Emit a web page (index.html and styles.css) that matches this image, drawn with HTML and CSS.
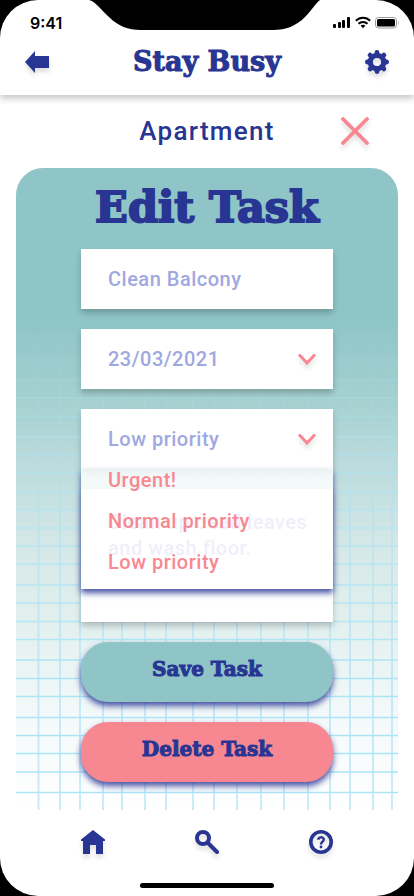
FILE: index.html
```html
<!DOCTYPE html>
<html lang="en">
<head>
<meta charset="utf-8">
<meta name="viewport" content="width=device-width, initial-scale=1">
<title>Stay Busy</title>
<link rel="stylesheet" href="styles.css">
</head>
<body>
<div class="screen">
  <header class="top">
    <svg class="notch" width="236" height="31" viewBox="0 0 236 31" aria-hidden="true"><path d="M0 0C6 1 12 10 20 17C29 26 39 30 52 30H184C197 30 207 26 216 17C223 10 227 3 231 0Z"/></svg>
    <div class="status">
      <span class="time">9:41</span>
      <svg width="68" height="14" viewBox="0 0 68 14" aria-hidden="true">
        <g fill="#000"><rect x="1" y="8" width="3" height="4" rx="1"/><rect x="6" y="6" width="3" height="6" rx="1"/><rect x="10" y="4" width="3" height="8" rx="1"/><rect x="15" y="1" width="3" height="11" rx="1"/></g>
        <g fill="none" stroke="#000" stroke-width="2"><path d="M23.8 4.8C28 .7 34 .7 38.200 4.800"/><path d="M26.500 7.700C29 5.300 33 5.300 35.500 7.700"/></g>
        <path d="M28.600 9.700Q31 7.700 33.400 9.700L31 12.200Z"/>
        <rect x="43.500" y="1.500" width="21" height="10.500" rx="3" fill="none" stroke="#999"/>
        <rect x="45" y="3" width="18" height="7.500" rx="1.500"/><path d="M66 5v4q1.500-2 0-4" fill="#999"/>
      </svg>
    </div>
    <div class="bar">
      <a class="icon" href="#" aria-label="Back"><svg width="24" height="24" viewBox="0 0 24 24"><path d="M0 12L10 1V6H24V18H10V23Z"/></svg></a>
      <h1 class="display brand">Stay Busy</h1>
      <button class="icon" type="button" aria-label="Settings"><svg width="24" height="24" viewBox="0 0 24 24"><circle cx="12" cy="12" r="6.700" fill="none" stroke="#283593" stroke-width="5.200"/><g stroke="#283593" stroke-width="4.800" stroke-linecap="round"><path d="M12 2.400V4M12 20v1.600M2.400 12H4M20 12h1.600M5.100 5.100l1.200 1.200M17.700 17.700l1.200 1.200M5.100 18.900l1.200-1.200M17.700 6.300l1.200-1.200"/></g></svg></button>
    </div>
  </header>

  <main>
    <div class="room">
      <h2>Apartment</h2>
      <button class="icon" type="button" aria-label="Close"><svg width="28" height="28" viewBox="0 0 28 28" fill="none" stroke="#f78891" stroke-width="3.800" stroke-linecap="round"><path d="M2 2L26 26M26 2L2 26"/></svg></button>
    </div>

    <form class="panel">
      <svg class="paper" viewBox="0 0 382 642" preserveAspectRatio="none" aria-hidden="true">
        <defs>
          <linearGradient id="wash" x1="0" y1="0" x2="0" y2="1">
            <stop offset=".24" stop-color="#8fc5c7"/>
            <stop offset=".35" stop-color="#a3cfcf"/>
            <stop offset=".45" stop-color="#b9dadb"/>
            <stop offset=".59" stop-color="#d5e8e8"/>
            <stop offset=".74" stop-color="#e6f2f1"/>
            <stop offset=".87" stop-color="#f5fafb"/>
            <stop offset="1" stop-color="#fff"/>
          </linearGradient>
          <linearGradient id="fade" x1="0" y1="0" x2="0" y2="642" gradientUnits="userSpaceOnUse">
            <stop offset=".24" stop-color="#fff" stop-opacity="0"/>
            <stop offset=".45" stop-color="#fff" stop-opacity=".5"/>
            <stop offset=".8" stop-color="#fff"/>
          </linearGradient>
          <mask id="lines"><rect width="382" height="642" fill="url(#fade)"/></mask>
        </defs>
        <rect width="382" height="642" fill="url(#wash)"/>
        <g mask="url(#lines)" fill="none" stroke-width="2">
          <path stroke="#a6dff5" stroke-opacity=".6" d="M22.500 0V642M44 0V642M64 0V642M87 0V642M106 0V642M129 0V642M150 0V642M177 0V642M198 0V642M221 0V642M245 0V642M268 0V642M292 0V642M314 0V642M334 0V642M357 0V642M376 0V642"/>
          <path stroke="#aae5f5" stroke-width="1.500" d="M0 192H382M0 212H382M0 230H382M0 248.500H382M0 269H382M0 287H382M0 305H382M0 323.500H382M0 342H382M0 360H382M0 378H382M0 396H382M0 417H382M0 435H382M0 453.500H382M0 471.500H382M0 492H382M0 510.500H382M0 528.500H382M0 549.500H382M0 567.500H382M0 585.500H382M0 604H382M0 624.500H382"/>
        </g>
      </svg>
      <h2 class="display title">Edit Task</h2>
      <div class="fields">
        <input class="field" type="text" value="Clean Balcony" aria-label="Task name">
        <div class="pick">
          <select class="field" aria-label="Date"><option>23/03/2021</option></select>
          <svg class="chevron" width="18" height="12" viewBox="0 0 18 12"><path d="M1 1.500L9 10L17 1.500"/></svg>
        </div>
        <div class="pick open">
          <select class="field" aria-label="Priority"><option>Low priority</option></select>
          <svg class="chevron" width="18" height="12" viewBox="0 0 18 12"><path d="M1 1.500L9 10L17 1.500"/></svg>
          <div class="menu">
            <button type="button">Urgent!</button>
            <button type="button">Normal priority</button>
            <button type="button">Low priority</button>
          </div>
        </div>
        <textarea class="field notes" aria-label="Notes">Clean up dead leaves and wash floor.</textarea>
        <button class="display action" type="submit">Save Task</button>
        <button class="display action delete" type="button">Delete Task</button>
      </div>
    </form>
  </main>

  <nav class="tabs">
    <a class="icon" href="#" aria-label="Home"><svg width="24" height="24" viewBox="0 0 24 24"><path d="M12 0L24 9.500V11H22V24H15V15H9V24H2V11H0V9.500Z"/></svg></a>
    <a class="icon" href="#" aria-label="Search"><svg width="24" height="24" viewBox="0 0 24 24" fill="none" stroke="#283593" stroke-width="4" stroke-linecap="round"><circle cx="8" cy="8" r="6"/><path d="M12.500 12.500L22 22"/></svg></a>
    <a class="icon" href="#" aria-label="Help"><svg width="24" height="24" viewBox="0 0 24 24" fill="none" stroke="#283593"><circle cx="12" cy="12" r="10.200" stroke-width="3.600"/><path stroke-width="2.400" d="M9.300 9.700C9.300 6.600 14.800 6.500 14.800 9.600C14.800 11.700 12 11.700 12 14.500"/><circle cx="12" cy="17" r="1.400" stroke="none" fill="#283593"/></svg></a>
  </nav>
  <div class="home-bar"></div>
</div>
</body>
</html>
```
FILE: styles.css
```css
* {
  box-sizing: border-box;
}

body {
  margin: 0;
  background: #000;
  color: #283593;
  font-family: Roboto, sans-serif;
  font-weight: 500;
}

h1,
h2 {
  margin: 0;
}

button,
input,
select,
textarea {
  margin: 0;
  padding: 0;
  border: 0;
  border-radius: 0;
  background: none;
  color: inherit;
  font: inherit;
  letter-spacing: inherit;
}

.screen {
  display: flex;
  flex-direction: column;
  position: relative;
  min-height: 100vh;
  overflow: hidden;
  border-radius: 38px;
  background: #fff;
}

.display {
  font-family: "DejaVu Serif", serif;
  font-weight: 700;
  -webkit-text-stroke: 1px #283593;
}

.icon {
  display: block;
  fill: #283593;
  filter: drop-shadow(0 4px 2px rgba(0, 0, 0, 0.12));
}

.icon svg {
  display: block;
}

/* Header */

.top {
  position: relative;
  padding-bottom: 16px;
  box-shadow: 0 4px 6px rgba(0, 0, 0, 0.2);
}

.notch {
  position: absolute;
  top: 0;
  left: 50%;
  transform: translateX(-50%);
}

.status {
  display: flex;
  align-items: center;
  justify-content: space-between;
  height: 45px;
  padding: 0 14px 0 30px;
}

.time {
  color: #000;
  font: 600 16px/20px Inter, sans-serif;
}

.bar {
  display: flex;
  align-items: center;
  justify-content: space-between;
  height: 34px;
  padding: 0 25px;
}

.brand {
  font-size: 27px;
  line-height: 34px;
}

/* Room heading */

.room {
  display: grid;
  grid-template-columns: 1fr auto 1fr;
  align-items: center;
  height: 73px;
  padding: 0 45px 2px;
}

.room h2 {
  grid-column: 2;
  font-size: 26px;
  font-weight: 500;
  letter-spacing: 0.05em;
}

.room .icon {
  justify-self: end;
}

/* Form panel */

.panel {
  position: relative;
  margin: 0 16px;
  padding: 15px 24px 28px;
  overflow: hidden;
  border-radius: 27px 27px 0 0;
}

.paper {
  position: absolute;
  inset: 0;
  width: 100%;
  height: 100%;
}

.title {
  position: relative;
  margin-bottom: 18px;
  font-size: 43px;
  line-height: 48px;
  text-align: center;
  -webkit-text-stroke-width: 2px;
}

.fields {
  display: flex;
  flex-direction: column;
  gap: 20px;
  position: relative;
  max-width: 252px;
  margin: 0 auto;
  font-size: 20px;
  letter-spacing: 0.025em;
}

.field {
  display: block;
  appearance: none;
  width: 100%;
  height: 60px;
  padding: 0 27px;
  background: #fff;
  box-shadow: 0 4px 6px rgba(0, 0, 0, 0.22);
  color: #9fa8e0;
}

.pick {
  position: relative;
}

.open {
  z-index: 1;
}

.chevron {
  position: absolute;
  top: 24px;
  right: 17px;
  fill: none;
  stroke: #f78891;
  stroke-width: 3px;
  filter: drop-shadow(0 4px 2px rgba(0, 0, 0, 0.12));
  overflow: visible;
  pointer-events: none;
}

.menu {
  position: absolute;
  top: 100%;
  left: 0;
  width: 100%;
  height: 120px;
  background: rgba(255, 255, 255, 0.82);
  box-shadow: 0 4px 6px rgba(40, 53, 147, 0.85);
  color: #f78891;
}

.menu button {
  display: block;
  width: 100%;
  height: 41px;
  padding: 0 27px 18px;
  line-height: 23px;
  text-align: left;
}

.notes {
  height: 133px;
  padding: 20px 16px 0 27px;
  line-height: 26px;
  overflow: hidden;
  resize: none;
}

.action {
  height: 60px;
  padding-bottom: 6px;
  border-radius: 27px;
  background: #8fc5c7;
  box-shadow: 0 4px 6px rgba(40, 53, 147, 0.85);
  color: #283593;
  font-family: "DejaVu Serif", serif;
  font-size: 20px;
  font-weight: 700;
  letter-spacing: normal;
}

.delete {
  background: #f78891;
}

/* Bottom navigation */

.tabs {
  display: flex;
  justify-content: space-between;
  width: 100%;
  max-width: 252px;
  margin: 20px auto 29px;
}

.home-bar {
  width: 134px;
  height: 5px;
  margin: 0 auto 8px;
  border-radius: 3px;
  background: #000;
}
```
